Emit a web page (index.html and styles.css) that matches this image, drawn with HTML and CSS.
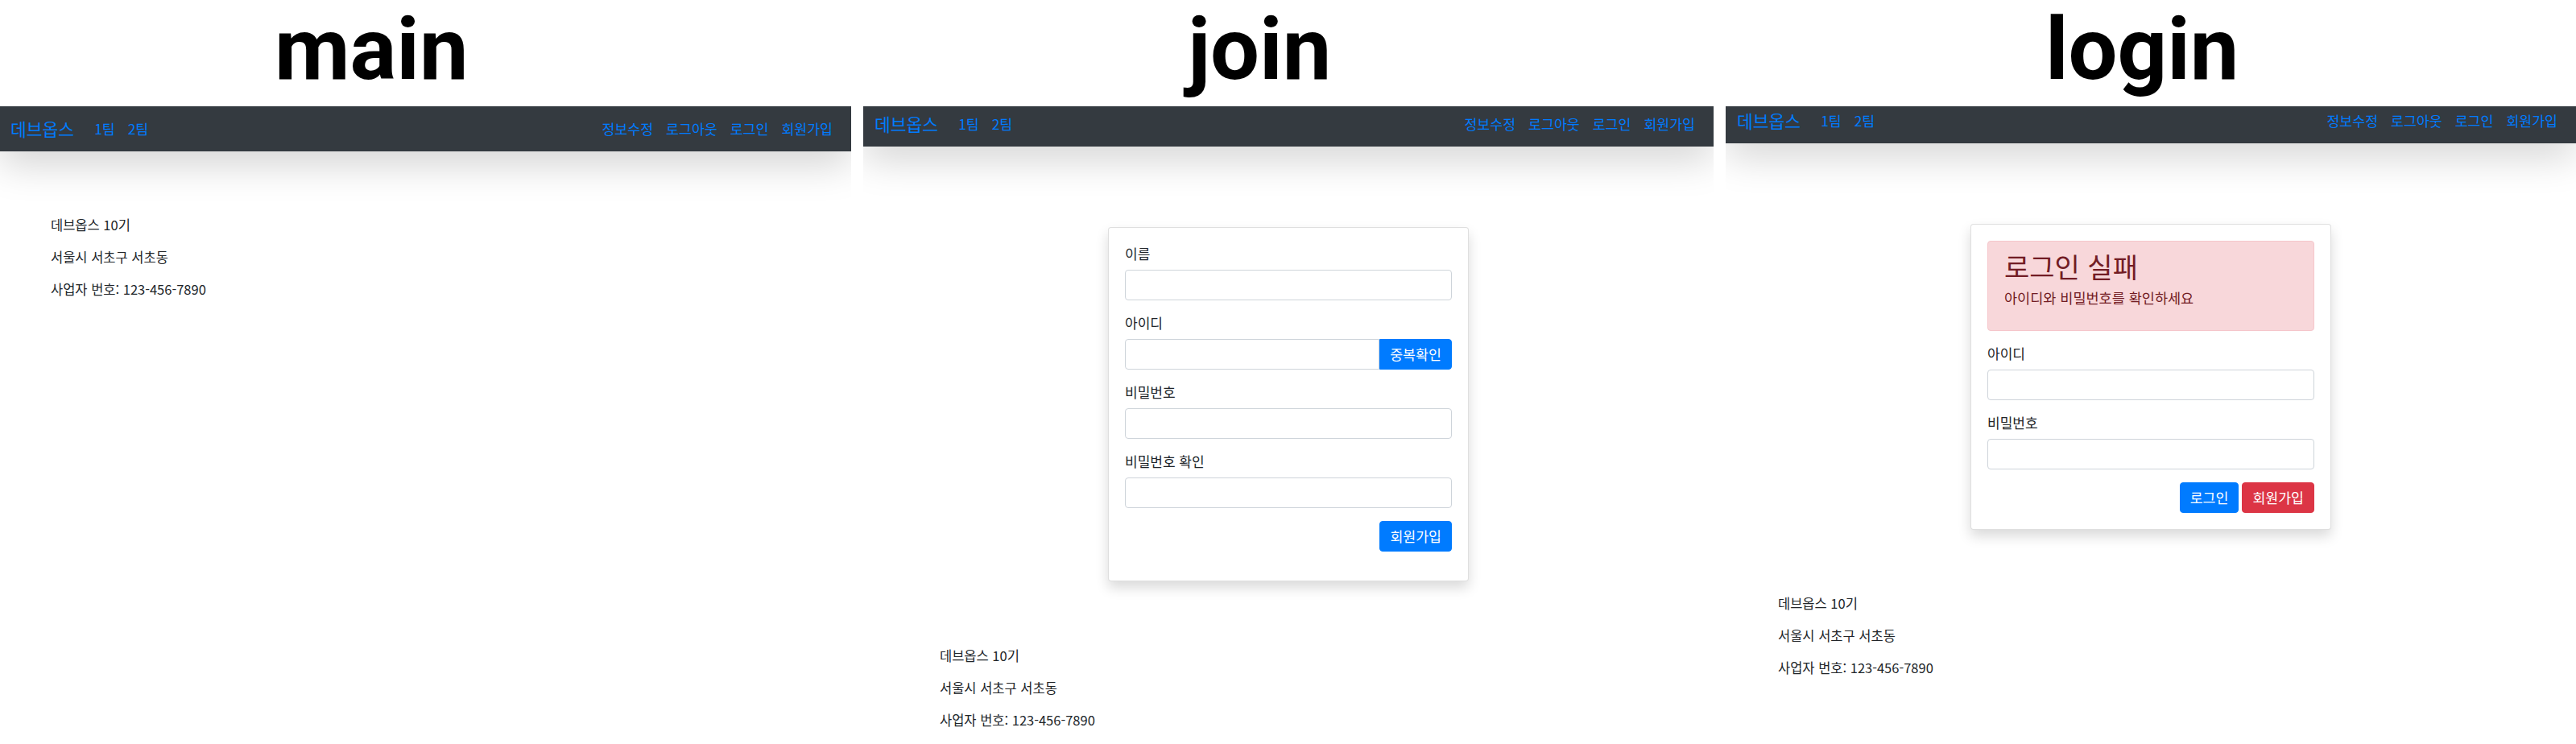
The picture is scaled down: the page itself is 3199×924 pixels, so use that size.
FILE: index.html
```html
<!DOCTYPE html>
<html lang="ko">
<head>
<meta charset="utf-8">
<title>main / join / login</title>
<link rel="stylesheet" href="styles.css">
</head>
<body>
<div class="board">

  <section class="panel panel-main">
    <h1 class="title">main</h1>
    <div class="screen">
      <nav class="navbar">
        <div class="nav-left">
          <a class="brand">데브옵스</a>
          <a class="nav-link">1팀</a>
          <a class="nav-link">2팀</a>
        </div>
        <div class="nav-right">
          <a class="nav-link">정보수정</a>
          <a class="nav-link">로그아웃</a>
          <a class="nav-link">로그인</a>
          <a class="nav-link">회원가입</a>
        </div>
      </nav>
      <footer class="footer">
        <p>데브옵스 10기</p>
        <p>서울시 서초구 서초동</p>
        <p>사업자 번호: 123-456-7890</p>
      </footer>
    </div>
  </section>

  <section class="panel panel-join">
    <h1 class="title">join</h1>
    <div class="screen">
      <nav class="navbar">
        <div class="nav-left">
          <a class="brand">데브옵스</a>
          <a class="nav-link">1팀</a>
          <a class="nav-link">2팀</a>
        </div>
        <div class="nav-right">
          <a class="nav-link">정보수정</a>
          <a class="nav-link">로그아웃</a>
          <a class="nav-link">로그인</a>
          <a class="nav-link">회원가입</a>
        </div>
      </nav>
      <div class="card">
        <div class="form-group">
          <label class="label">이름</label>
          <input class="input" type="text">
        </div>
        <div class="form-group">
          <label class="label">아이디</label>
          <div class="input-group">
            <input class="input input-joined" type="text">
            <button class="btn btn-primary btn-joined">중복확인</button>
          </div>
        </div>
        <div class="form-group">
          <label class="label">비밀번호</label>
          <input class="input" type="password">
        </div>
        <div class="form-group">
          <label class="label">비밀번호 확인</label>
          <input class="input" type="password">
        </div>
        <div class="form-group actions">
          <button class="btn btn-primary">회원가입</button>
        </div>
      </div>
      <footer class="footer">
        <p>데브옵스 10기</p>
        <p>서울시 서초구 서초동</p>
        <p>사업자 번호: 123-456-7890</p>
      </footer>
    </div>
  </section>

  <section class="panel panel-login">
    <h1 class="title">login</h1>
    <div class="screen">
      <nav class="navbar">
        <div class="nav-left">
          <a class="brand">데브옵스</a>
          <a class="nav-link">1팀</a>
          <a class="nav-link">2팀</a>
        </div>
        <div class="nav-right">
          <a class="nav-link">정보수정</a>
          <a class="nav-link">로그아웃</a>
          <a class="nav-link">로그인</a>
          <a class="nav-link">회원가입</a>
        </div>
      </nav>
      <div class="card">
        <div class="alert">
          <h2 class="alert-heading">로그인 실패</h2>
          <p class="alert-text">아이디와 비밀번호를 확인하세요</p>
        </div>
        <div class="form-group">
          <label class="label">아이디</label>
          <input class="input" type="text">
        </div>
        <div class="form-group">
          <label class="label">비밀번호</label>
          <input class="input" type="password">
        </div>
        <div class="actions">
          <button class="btn btn-primary">로그인</button>
          <button class="btn btn-danger">회원가입</button>
        </div>
      </div>
      <footer class="footer">
        <p>데브옵스 10기</p>
        <p>서울시 서초구 서초동</p>
        <p>사업자 번호: 123-456-7890</p>
      </footer>
    </div>
  </section>

</div>
</body>
</html>
```

FILE: styles.css
```css
* { box-sizing: border-box; }

html, body {
  margin: 0;
  padding: 0;
  background: #fff;
}

body {
  font-family: "Noto Sans CJK KR", "Noto Sans", sans-serif;
  color: #212529;
  width: 3199px;
  height: 924px;
  overflow: hidden;
}

.board {
  display: grid;
  grid-template-columns: 1057px 1056px 1056px;
  column-gap: 15px;
  height: 924px;
}

.panel {
  display: flex;
  flex-direction: column;
  min-width: 0;
}

.title {
  margin: 0;
  height: 132px;
  padding-top: 7px;
  font-family: Roboto, "Liberation Sans", sans-serif;
  font-weight: 700;
  font-size: 108px;
  line-height: 108px;
  letter-spacing: 0;
  color: #000;
  white-space: nowrap;
}
.panel-main .title { padding-left: 341px; }
.panel-join .title { padding-left: 403px; }
.panel-login .title { padding-left: 397px; }

.screen {
  flex: 1;
  overflow: hidden;
  display: flex;
  flex-direction: column;
  background: #fff;
}

/* navbar */
.navbar {
  position: relative;
  z-index: 2;
  flex: none;
  display: flex;
  justify-content: space-between;
  align-items: flex-end;
  height: 56px;
  padding: 0 15px 8px 13px;
  background: #343a40;
  box-shadow: 0 16px 48px rgba(0, 0, 0, .175);
}
.panel-join .navbar { height: 50px; padding-left: 14px; }
.panel-login .navbar { height: 46px; padding-left: 14px; }

.nav-left, .nav-right {
  display: flex;
  align-items: flex-end;
}

.brand {
  color: #007bff;
  font-size: 21.5px;
  line-height: 30px;
  padding: 5px 0;
  margin-right: 17px;
  white-space: nowrap;
}

.nav-link {
  color: #007bff;
  font-size: 17.3px;
  line-height: 24px;
  padding: 8px 8px;
  white-space: nowrap;
}

/* footer */
.footer {
  margin-top: 79px;
  font-size: 16.5px;
  line-height: 24px;
  color: #212529;
}
.footer p { margin: 0 0 16px; }
.panel-main .footer { padding-left: 63px; }
.panel-join .footer { padding-left: 95px; margin-top: 80px; }
.panel-login .footer { padding-left: 65px; margin-top: 79px; }

/* card */
.card {
  position: relative;
  width: 448px;
  margin: 100px auto 0;
  padding: 20px;
  background: #fff;
  border: 1px solid rgba(0, 0, 0, .125);
  border-radius: 4px;
  box-shadow: 0 8px 16px rgba(0, 0, 0, .15);
}

.form-group {
  display: flex;
  flex-direction: column;
  margin-bottom: 16px;
}

.label {
  font-size: 17px;
  line-height: 24px;
  margin-bottom: 8px;
  color: #212529;
}

.input {
  display: block;
  width: 100%;
  height: 38px;
  padding: 6px 12px;
  font: inherit;
  font-size: 16px;
  border: 1px solid #ced4da;
  border-radius: 4px;
  background: #fff;
  outline: none;
}

.input-group {
  display: flex;
}
.input-joined {
  flex: 1;
  min-width: 0;
  border-top-right-radius: 0;
  border-bottom-right-radius: 0;
}

.btn {
  font-family: "Noto Sans CJK KR", sans-serif;
  font-size: 17.3px;
  line-height: 24px;
  height: 38px;
  padding: 6px 12px;
  border: 1px solid transparent;
  border-radius: 4px;
  color: #fff;
  white-space: nowrap;
  cursor: pointer;
}
.btn-primary { background: #007bff; border-color: #007bff; }
.btn-danger { background: #dc3545; border-color: #dc3545; }
.btn-joined {
  flex: none;
  width: 90px;
  padding: 6px 0;
  border-top-left-radius: 0;
  border-bottom-left-radius: 0;
}

.actions {
  display: flex;
  flex-direction: row;
  justify-content: flex-end;
  gap: 4px;
}

/* alert */
.alert {
  padding: 12px 20px;
  margin-bottom: 16px;
  background: #f8d7da;
  border: 1px solid #f5c6cb;
  border-radius: 4px;
  color: #721c24;
}
.alert-heading {
  margin: 0 0 8px;
  font-size: 34px;
  font-weight: 400;
  line-height: 38.4px;
}
.alert-text {
  margin: 0 0 16px;
  font-size: 17.5px;
  line-height: 24px;
}
```
